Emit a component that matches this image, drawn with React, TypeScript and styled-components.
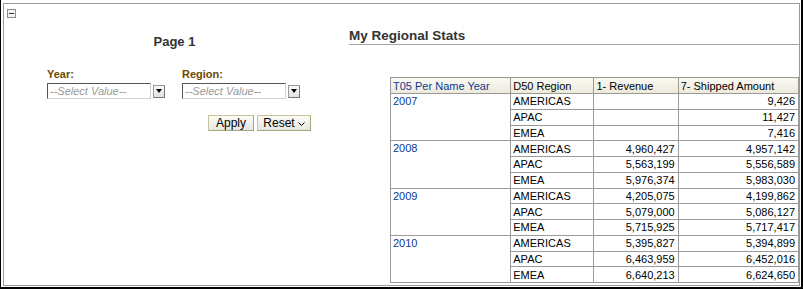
import React from "react";
import styled, { createGlobalStyle } from "styled-components";

const Global = createGlobalStyle`
  html, body { margin: 0; padding: 0; background: #fff; }
  body { font-family: "Liberation Sans", Arial, sans-serif; }
`;

const Frame = styled.div`
  width: 803px;
  height: 289px;
  box-sizing: border-box;
  border-left: 1px solid #000;
  border-right: 2px solid #000;
  border-bottom: 2px solid #000;
  padding: 3px 1px 1px 2px;
  background: #fff;
`;

const Inner = styled.div`
  height: 100%;
  box-sizing: border-box;
  border: 1px solid #9a9a9a;
  display: flex;
`;

const LeftPanel = styled.div`
  width: 341px;
  position: relative;
  display: flex;
  flex-direction: column;
`;

const Collapse = styled.div`
  position: absolute;
  left: 3px;
  top: 5px;
  width: 7px;
  height: 7px;
  border: 1px solid #8c8c8c;
  background: #f2f2f2;
  display: flex;
  align-items: center;
  justify-content: center;
  &::after {
    content: "";
    width: 5px;
    height: 1px;
    background: #333;
  }
`;

const PageTitle = styled.div`
  margin-top: 30px;
  text-align: center;
  font-weight: bold;
  font-size: 13px;
  color: #333;
  height: 16px;
  line-height: 16px;
`;

const Prompts = styled.div`
  margin-top: 18px;
  margin-left: 43px;
  display: flex;
  gap: 17px;
`;

const Prompt = styled.div`
  display: flex;
  flex-direction: column;
`;

const Label = styled.div`
  font-weight: bold;
  font-size: 11px;
  color: #6b4a00;
  height: 15px;
  line-height: 13px;
`;

const SelectRow = styled.div`
  display: flex;
  align-items: center;
  gap: 2px;
`;

const SelectBox = styled.div`
  width: 104px;
  height: 16px;
  box-sizing: border-box;
  border-top: 1px solid #555;
  border-left: 1px solid #555;
  border-right: 1px solid #d0d0d0;
  border-bottom: 1px solid #d0d0d0;
  font-style: italic;
  font-size: 11px;
  color: #9a9a9a;
  line-height: 14px;
  padding-left: 2px;
  white-space: nowrap;
  overflow: hidden;
`;

const DropBtn = styled.div`
  width: 12px;
  height: 13px;
  box-sizing: border-box;
  border: 1px solid #9a9a9a;
  border-right-color: #777;
  border-bottom-color: #777;
  background: linear-gradient(#fafafa, #e2e2e2);
  display: flex;
  align-items: center;
  justify-content: center;
  &::after {
    content: "";
    border-left: 3px solid transparent;
    border-right: 3px solid transparent;
    border-top: 4px solid #000;
  }
`;

const Buttons = styled.div`
  margin-top: 16px;
  margin-left: 204px;
  display: flex;
  gap: 3px;
`;

const Btn = styled.div<{ $w: number }>`
  width: ${(p) => p.$w}px;
  height: 16px;
  box-sizing: border-box;
  border: 1px solid #c9c39a;
  border-right-color: #a9a47c;
  border-bottom-color: #a9a47c;
  background: linear-gradient(#fbfbf8, #e6e6e0);
  font-size: 12px;
  color: #000;
  display: flex;
  align-items: center;
  justify-content: center;
  gap: 3px;
`;

const Chevron = styled.svg`
  width: 7px;
  height: 5px;
  margin-top: 3px;
`;

const RightPanel = styled.div`
  flex: 1;
  padding-left: 4px;
  display: flex;
  flex-direction: column;
`;

const Section = styled.div`
  margin-top: 24px;
  font-weight: bold;
  font-size: 13.5px;
  color: #333;
  height: 16px;
  line-height: 16px;
  border-bottom: 1px solid #a6a6a6;
`;

const Table = styled.table`
  margin-top: 32px;
  margin-left: 41px;
  border-collapse: collapse;
  font-size: 11px;
  border: 1px solid #8a8a8a;
`;

const Th = styled.th<{ $w: number; $blue?: boolean }>`
  width: ${(p) => p.$w}px;
  height: 16px;
  padding: 0 0 0 2px;
  text-align: left;
  font-weight: normal;
  color: ${(p) => (p.$blue ? "#0b3a96" : "#000")};
  background: linear-gradient(#fbfaf4, #ece9d8);
  border: 1px solid #9a9a9a;
  white-space: nowrap;
  box-sizing: border-box;
`;

const Td = styled.td<{ $num?: boolean; $year?: boolean }>`
  height: 14.75px;
  padding: 0 ${(p) => (p.$num ? "3px" : "0")} 0 ${(p) => (p.$num ? "0" : "2px")};
  text-align: ${(p) => (p.$num ? "right" : "left")};
  vertical-align: ${(p) => (p.$year ? "top" : "middle")};
  color: ${(p) => (p.$year ? "#0b3a96" : "#000")};
  border: 1px solid #9a9a9a;
  white-space: nowrap;
  line-height: 14px;
`;

const data: [string, [string, string, string][]][] = [
  ["2007", [["AMERICAS", "", "9,426"], ["APAC", "", "11,427"], ["EMEA", "", "7,416"]]],
  ["2008", [["AMERICAS", "4,960,427", "4,957,142"], ["APAC", "5,563,199", "5,556,589"], ["EMEA", "5,976,374", "5,983,030"]]],
  ["2009", [["AMERICAS", "4,205,075", "4,199,862"], ["APAC", "5,079,000", "5,086,127"], ["EMEA", "5,715,925", "5,717,417"]]],
  ["2010", [["AMERICAS", "5,395,827", "5,394,899"], ["APAC", "6,463,959", "6,452,016"], ["EMEA", "6,640,213", "6,624,650"]]],
];

export default function App() {
  return (
    <>
      <Global />
      <Frame>
        <Inner>
          <LeftPanel>
            <Collapse />
            <PageTitle>Page 1</PageTitle>
            <Prompts>
              <Prompt>
                <Label>Year:</Label>
                <SelectRow>
                  <SelectBox>--Select Value--</SelectBox>
                  <DropBtn />
                </SelectRow>
              </Prompt>
              <Prompt>
                <Label>Region:</Label>
                <SelectRow>
                  <SelectBox>--Select Value--</SelectBox>
                  <DropBtn />
                </SelectRow>
              </Prompt>
            </Prompts>
            <Buttons>
              <Btn $w={46}>Apply</Btn>
              <Btn $w={54}>
                Reset
                <Chevron viewBox="0 0 7 5">
                  <path d="M0.5 0.5 L3.5 3.5 L6.5 0.5" fill="none" stroke="#000" strokeWidth="1" />
                </Chevron>
              </Btn>
            </Buttons>
          </LeftPanel>
          <RightPanel>
            <Section>My Regional Stats</Section>
            <Table>
              <thead>
                <tr>
                  <Th $w={120} $blue>T05 Per Name Year</Th>
                  <Th $w={83}>D50 Region</Th>
                  <Th $w={84}>1- Revenue</Th>
                  <Th $w={120}>7- Shipped Amount</Th>
                </tr>
              </thead>
              <tbody>
                {data.map(([year, rows]) =>
                  rows.map((r, i) => (
                    <tr key={year + r[0]}>
                      {i === 0 && (
                        <Td $year rowSpan={3}>
                          {year}
                        </Td>
                      )}
                      <Td>{r[0]}</Td>
                      <Td $num>{r[1]}</Td>
                      <Td $num>{r[2]}</Td>
                    </tr>
                  ))
                )}
              </tbody>
            </Table>
          </RightPanel>
        </Inner>
      </Frame>
    </>
  );
}
